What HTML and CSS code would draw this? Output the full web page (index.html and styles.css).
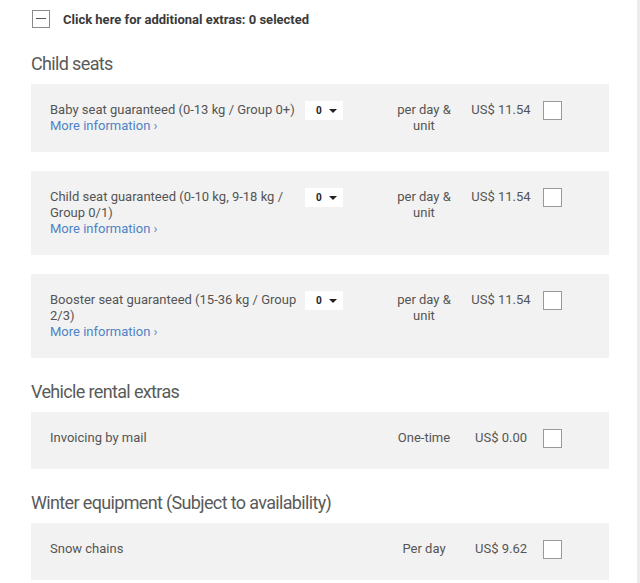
FILE: index.html
```html
<!DOCTYPE html>
<html>
<head>
<meta charset="utf-8">
<link rel="stylesheet" href="styles.css">
</head>
<body>
<div class="page">
  <div class="toggle">
    <span class="minus-box"></span>
    <span class="toggle-label">Click here for additional extras: 0 selected</span>
  </div>

  <h2 class="section-title first">Child seats</h2>
  <div class="extra">
    <div class="desc">Baby seat guaranteed (0-13 kg / Group 0+)<br><a class="more">More information ›</a></div>
    <div class="qty-cell"><span class="qty">0<span class="caret"></span></span></div>
    <div class="unit">per day &amp; unit</div>
    <div class="price">US$ 11.54</div>
    <span class="check"></span>
  </div>
  <div class="extra">
    <div class="desc">Child seat guaranteed (0-10 kg, 9-18 kg / Group 0/1)<br><a class="more">More information ›</a></div>
    <div class="qty-cell"><span class="qty">0<span class="caret"></span></span></div>
    <div class="unit">per day &amp; unit</div>
    <div class="price">US$ 11.54</div>
    <span class="check"></span>
  </div>
  <div class="extra">
    <div class="desc">Booster seat guaranteed (15-36 kg / Group 2/3)<br><a class="more">More information ›</a></div>
    <div class="qty-cell"><span class="qty">0<span class="caret"></span></span></div>
    <div class="unit">per day &amp; unit</div>
    <div class="price">US$ 11.54</div>
    <span class="check"></span>
  </div>

  <h2 class="section-title">Vehicle rental extras</h2>
  <div class="extra">
    <div class="desc">Invoicing by mail</div>
    <div class="qty-cell"></div>
    <div class="unit">One-time</div>
    <div class="price">US$ 0.00</div>
    <span class="check"></span>
  </div>

  <h2 class="section-title">Winter equipment (Subject to availability)</h2>
  <div class="extra">
    <div class="desc">Snow chains</div>
    <div class="qty-cell"></div>
    <div class="unit">Per day</div>
    <div class="price">US$ 9.62</div>
    <span class="check"></span>
  </div>
</div>
</body>
</html>
```

FILE: styles.css
```css
html, body {
  margin: 0;
  padding: 0;
  background: #fff;
}
body {
  font-family: Roboto, "Liberation Sans", sans-serif;
  color: #555;
  border-right: 3px solid #ececec;
  min-height: 583px;
  box-sizing: border-box;
}
.page {
  width: 578px;
  padding: 10px 0 0 31px;
}
.toggle {
  display: flex;
  align-items: center;
  height: 18px;
}
.minus-box {
  box-sizing: border-box;
  width: 18px;
  height: 18px;
  margin-left: 1px;
  border: 1px solid #8a8a8a;
  position: relative;
  display: block;
}
.minus-box::after {
  content: "";
  position: absolute;
  left: 3px;
  right: 3px;
  top: 7px;
  height: 1px;
  background: #555;
}
.toggle-label {
  margin-left: 13px;
  font-weight: bold;
  font-size: 13px;
  color: #3a3a3a;
}
.section-title {
  margin: 22px 0 9px 0;
  font-size: 18px;
  line-height: 22px;
  font-weight: normal;
  color: #5a5a5a;
  letter-spacing: -0.65px;
}
.section-title.first {
  margin-top: 25px;
}
.extra {
  display: flex;
  align-items: flex-start;
  background: #f2f2f2;
  padding: 18px 0 18px 19px;
  margin-bottom: 19px;
  font-size: 13px;
  line-height: 16px;
}
.extra + .section-title {
  margin-top: 23px;
}
.desc {
  flex: 0 0 250px;
  margin-right: 5px;
}
.more {
  color: #4f82c6;
  text-decoration: none;
}
.qty-cell {
  flex: 0 0 84px;
}
.qty {
  display: flex;
  align-items: center;
  width: 38px;
  height: 19px;
  margin-top: -1px;
  background: #fff;
  box-sizing: border-box;
  padding-left: 11px;
  font-size: 10px;
  font-weight: bold;
  color: #222;
}
.caret {
  width: 0;
  height: 0;
  margin-left: 7px;
  border-left: 4px solid transparent;
  border-right: 4px solid transparent;
  border-top: 4px solid #222;
}
.unit {
  flex: 0 0 70px;
  text-align: center;
}
.price {
  flex: 0 0 84px;
  text-align: center;
}
.check {
  display: block;
  box-sizing: border-box;
  width: 19px;
  height: 19px;
  margin: -1px 0 3px 0;
  background: #fff;
  border: 1px solid #999;
}
```
